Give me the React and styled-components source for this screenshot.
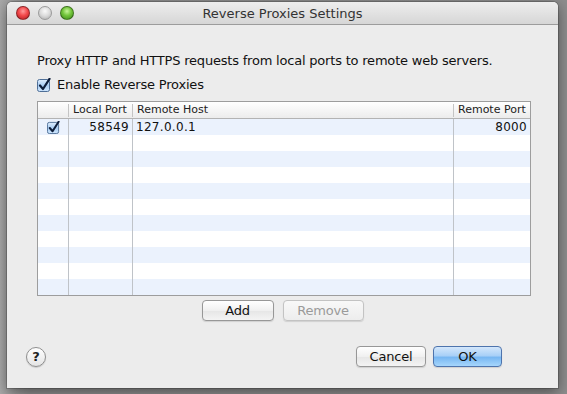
import React from 'react';
import styled, { createGlobalStyle } from 'styled-components';

const GlobalStyle = createGlobalStyle`
  html, body {
    margin: 0;
    padding: 0;
    height: 100%;
    overflow: hidden;
  }
  body {
    background: linear-gradient(90deg, #a9a9a9 0px, #8f8f8f 30px, #8d8d8d 100%);
    font-family: "DejaVu Sans", "Liberation Sans", sans-serif;
  }
`;

const Desktop = styled.div`
  width: 567px;
  height: 394px;
  padding: 2px 0 0 7px;
  box-sizing: border-box;
`;

const Window = styled.div`
  width: 551px;
  height: 386px;
  background: #ececec;
  border-radius: 5px 5px 0 0;
  box-shadow: 0 4px 14px rgba(0, 0, 0, 0.45), 0 0 0 1px rgba(0, 0, 0, 0.18);
  display: flex;
  flex-direction: column;
  overflow: hidden;
`;

const TitleBar = styled.div`
  height: 22px;
  display: flex;
  align-items: center;
  position: relative;
  background: linear-gradient(#eeeeee, #d6d6d6);
  border-bottom: 1px solid #9c9c9c;
  padding-left: 9px;
`;

const Lights = styled.div`
  display: flex;
  gap: 8px;
`;

const lightColors = {
  red: 'radial-gradient(circle at 50% 35%, #ff9a9a 0%, #f2494b 45%, #b01a1d 100%)',
  gray: 'radial-gradient(circle at 50% 35%, #fafafa 0%, #dadada 50%, #a9a9a9 100%)',
  green: 'radial-gradient(circle at 50% 35%, #c6f59a 0%, #72c43a 45%, #3c8a1a 100%)',
};

const Light = styled.span`
  width: 12px;
  height: 12px;
  border-radius: 50%;
  background: ${p => lightColors[p.$color]};
  border: 1px solid ${p => (p.$color === 'gray' ? '#9a9a9a' : 'rgba(0,0,0,0.35)')};
`;

const Title = styled.div`
  position: absolute;
  left: 0;
  right: 0;
  top: 0;
  bottom: 0;
  display: flex;
  align-items: center;
  justify-content: center;
  font-size: 13px;
  color: #333;
  pointer-events: none;
`;

const Content = styled.div`
  flex: 1;
  display: flex;
  flex-direction: column;
  padding: 28px 28px 21px 30px;
`;

const Description = styled.div`
  font-size: 13px;
  line-height: 16px;
  color: #111;
  white-space: nowrap;
  letter-spacing: -0.2px;
`;

const CheckRow = styled.label`
  display: flex;
  align-items: center;
  gap: 6px;
  margin-top: 8px;
  font-size: 13px;
  line-height: 16px;
  color: #111;
  letter-spacing: -0.2px;
`;

const Table = styled.div`
  margin-top: 8px;
  width: 494px;
  border: 1px solid #9d9d9d;
  box-sizing: border-box;
  background: #fff;
`;

const Grid = styled.div`
  display: grid;
  grid-template-columns: 31px 64px 321px 1fr;
`;

const HeaderRow = styled(Grid)`
  height: 16px;
  background: linear-gradient(#ffffff, #ececec);
  border-bottom: 1px solid #b3b3b3;
`;

const HeaderCell = styled.div`
  font-size: 11px;
  line-height: 16px;
  color: #222;
  padding: 0 4px;
  text-align: ${p => p.$align || 'left'};
  white-space: nowrap;
  overflow: hidden;
  position: relative;
  &:not(:last-child)::after {
    content: '';
    position: absolute;
    right: 0;
    top: 2px;
    bottom: 1px;
    width: 1px;
    background: #c4c4c4;
  }
`;

const Row = styled(Grid)`
  height: 16px;
  background: ${p => (p.$striped ? '#ebf2fd' : '#ffffff')};
`;

const Cell = styled.div`
  font-size: 12px;
  line-height: 16px;
  color: #111;
  padding: 0 3px;
  display: flex;
  align-items: center;
  justify-content: ${p => p.$align || 'flex-start'};
  border-right: 1px solid #bfc3c8;
  letter-spacing: 0.3px;
  &:last-child {
    border-right: none;
  }
`;

const TableButtons = styled.div`
  display: flex;
  justify-content: center;
  gap: 9px;
  margin-top: 4px;
  padding-right: 2px;
`;

const Button = styled.button`
  height: 21px;
  width: ${p => p.$width}px;
  padding: 0;
  border-radius: 4px;
  font-family: "DejaVu Sans", "Liberation Sans", sans-serif;
  font-size: 13px;
  letter-spacing: -0.2px;
  color: ${p => (p.disabled ? '#9a9a9a' : '#111')};
  border: 1px solid ${p => (p.$primary ? '#4e74ad' : p.disabled ? '#c3c3c3' : '#979797')};
  background: ${p =>
    p.$primary
      ? 'linear-gradient(#d4e7fb 0%, #a9d0f7 45%, #78b7f2 55%, #a6d6fc 100%)'
      : p.disabled
      ? 'linear-gradient(#f8f8f8, #ededed)'
      : 'linear-gradient(#ffffff, #f0f0f0 50%, #e6e6e6 51%, #f4f4f4)'};
  box-shadow: 0 1px 1px rgba(0, 0, 0, 0.12);
`;

const Footer = styled.div`
  margin-top: auto;
  display: flex;
  align-items: center;
  margin-left: -11px;
  margin-right: 28px;
`;

const HelpButton = styled.button`
  width: 20px;
  height: 20px;
  border-radius: 50%;
  padding: 0;
  border: 1px solid #8f8f8f;
  background: linear-gradient(#ffffff, #e4e4e4);
  font-family: "DejaVu Sans", "Liberation Sans", sans-serif;
  font-weight: bold;
  font-size: 13px;
  color: #222;
  line-height: 18px;
  box-shadow: 0 1px 1px rgba(0, 0, 0, 0.15);
`;

const DialogButtons = styled.div`
  margin-left: auto;
  display: flex;
  gap: 7px;
`;

const CheckIcon = ({ size = 14 }) => (
  <svg width={size} height={size} viewBox="0 0 14 14">
    <defs>
      <linearGradient id="cbg" x1="0" y1="0" x2="0" y2="1">
        <stop offset="0" stopColor="#dfeefe" />
        <stop offset="0.5" stopColor="#a9cdf3" />
        <stop offset="1" stopColor="#cfe6fd" />
      </linearGradient>
    </defs>
    <rect x="0.5" y="1.5" width="12" height="12" rx="2" fill="url(#cbg)" stroke="#4f6f97" />
    <path d="M3 7.5 L6 11 L12.5 0.8" fill="none" stroke="#0d1d3a" strokeWidth="2.2" strokeLinecap="round" strokeLinejoin="round" />
  </svg>
);

const rows = Array.from({ length: 11 }, (_, i) => i);

export default function App() {
  return (
    <Desktop>
      <GlobalStyle />
      <Window>
        <TitleBar>
          <Lights>
            <Light $color="red" />
            <Light $color="gray" />
            <Light $color="green" />
          </Lights>
          <Title>Reverse Proxies Settings</Title>
        </TitleBar>
        <Content>
          <Description>Proxy HTTP and HTTPS requests from local ports to remote web servers.</Description>
          <CheckRow>
            <CheckIcon />
            Enable Reverse Proxies
          </CheckRow>
          <Table>
            <HeaderRow>
              <HeaderCell />
              <HeaderCell>Local Port</HeaderCell>
              <HeaderCell>Remote Host</HeaderCell>
              <HeaderCell>Remote Port</HeaderCell>
            </HeaderRow>
            {rows.map(i => (
              <Row key={i} $striped={i % 2 === 0}>
                {i === 0 ? (
                  <>
                    <Cell $align="center"><CheckIcon size={13} /></Cell>
                    <Cell $align="flex-end">58549</Cell>
                    <Cell>127.0.0.1</Cell>
                    <Cell $align="flex-end">8000</Cell>
                  </>
                ) : (
                  <>
                    <Cell />
                    <Cell />
                    <Cell />
                    <Cell />
                  </>
                )}
              </Row>
            ))}
          </Table>
          <TableButtons>
            <Button $width={72}>Add</Button>
            <Button $width={81} disabled>Remove</Button>
          </TableButtons>
          <Footer>
            <HelpButton>?</HelpButton>
            <DialogButtons>
              <Button $width={70}>Cancel</Button>
              <Button $width={69} $primary>OK</Button>
            </DialogButtons>
          </Footer>
        </Content>
      </Window>
    </Desktop>
  );
}
